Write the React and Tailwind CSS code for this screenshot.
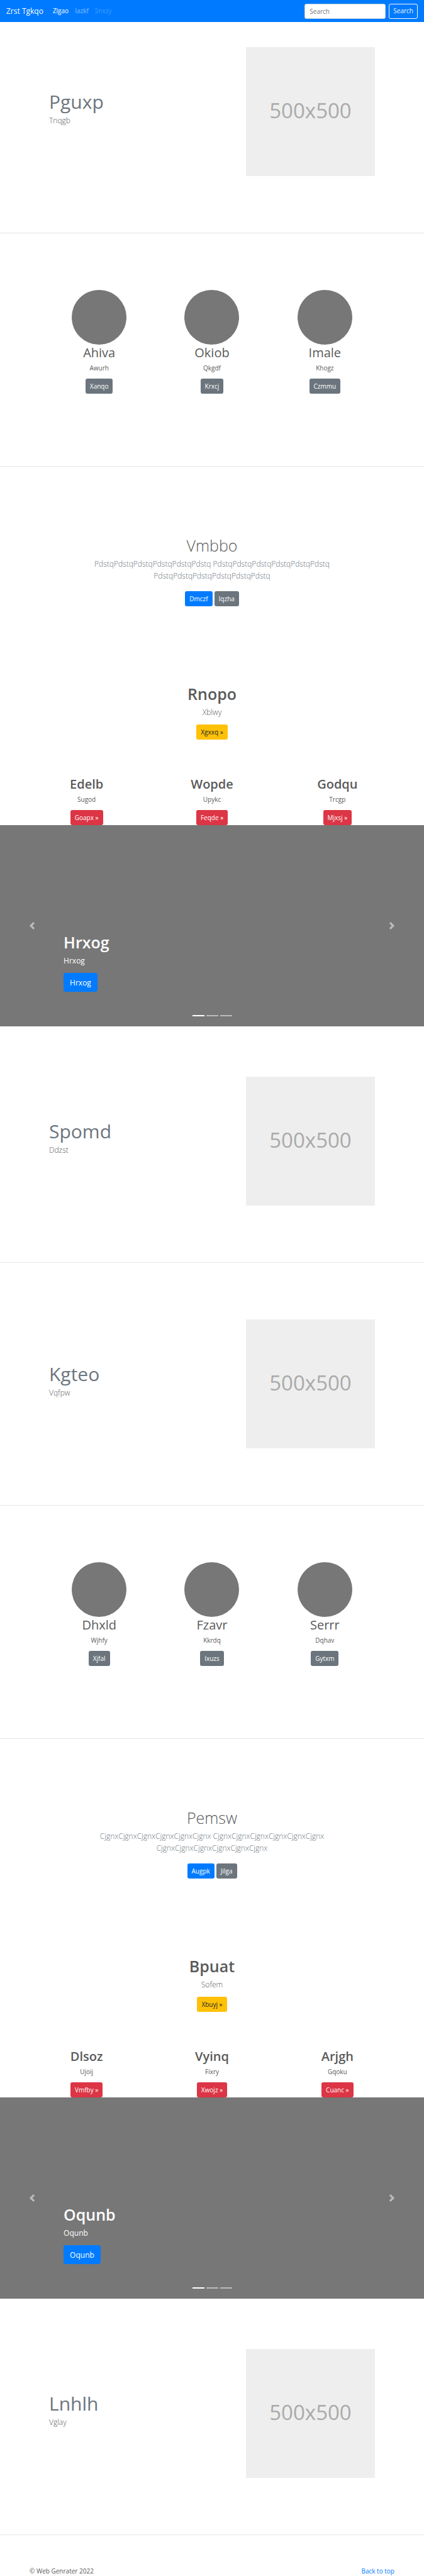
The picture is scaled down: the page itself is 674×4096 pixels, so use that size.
const button = "inline-flex h-6 items-center justify-center rounded-[3px] px-[7px] text-[10px] leading-[15px]";

function Navbar() {
  return (
    <nav className="flex h-[35px] items-center bg-[#007bff] px-[10px] text-white">
      <a href="#" className="mr-[15px] text-[12px] leading-[19px]">Zrst Tgkqo</a>
      <div className="flex gap-[10px] text-[10px] leading-[15px]">
        <a href="#">Zlgao</a>
        <a href="#" className="text-white/50">Iazkf</a>
        <a href="#" className="text-white/25">Snxzy</a>
      </div>
      <form className="ml-auto flex gap-[5px]" onSubmit={(e) => e.preventDefault()}>
        <input
          type="search"
          aria-label="Search"
          placeholder="Search"
          className="h-6 w-[129px] rounded-[3px] border border-[#ced4da] bg-white px-[7px] text-[10px] text-[#495057] placeholder:text-[#6c757d]"
        />
        <button className="h-6 rounded-[3px] border border-[#f8f9fa] px-[6px] text-[10px] leading-[15px] text-[#f8f9fa]">
          Search
        </button>
      </form>
    </nav>
  );
}

function Divider() {
  return <hr className="border-0 border-t border-solid border-[#e6e6e6]" />;
}

function Feature({ title, text, className }) {
  return (
    <section className={`flex justify-between px-[78px] pb-[90px] ${className}`}>
      <div className="pt-[69px]">
        <h2 className="text-[30px] leading-[35px] text-[#6c757d]">{title}</h2>
        <p className="mt-[3px] text-[12px] leading-[19px] font-light">{text}</p>
      </div>
      <div className="flex size-[205px] items-center justify-center bg-[#eeeeee] pb-[3px] text-[33px] leading-[40px] text-[#aaaaaa]">
        500x500
      </div>
    </section>
  );
}

function Circles({ items }) {
  return (
    <section className="grid grid-cols-3 px-[68px] pt-[90px] pb-[115px] text-center">
      {items.map(([title, text, action]) => (
        <div key={title} className="flex flex-col items-center">
          <div className="size-[87px] rounded-full bg-[#777777]" />
          <h2 className="text-[20px] leading-[25px]">{title}</h2>
          <p className="mt-[5px] text-[10px] leading-[15px]">{text}</p>
          <a href="#" className={`${button} mt-[9px] bg-[#6c757d] text-white`}>{action}</a>
        </div>
      ))}
    </section>
  );
}

function Album({ title, text, primary, secondary }) {
  return (
    <section className="mx-auto flex max-w-[400px] flex-col items-center pt-[110px] text-center">
      <h1 className="text-[25px] leading-[30px] font-light">{title}</h1>
      <p className="mt-[5px] text-[12px] leading-[19px] font-light text-[#6c757d]">{text}</p>
      <div className="mt-[15px] flex gap-[3px] text-white">
        <a href="#" className={`${button} bg-[#007bff]`}>{primary}</a>
        <a href="#" className={`${button} bg-[#6c757d]`}>{secondary}</a>
      </div>
    </section>
  );
}

function Pricing({ title, text, action, items }) {
  return (
    <section className="pt-[124px] text-center">
      <div className="flex flex-col items-center">
        <h1 className="text-[25px] leading-[30px] font-semibold">{title}</h1>
        <p className="mt-[5px] text-[12px] leading-[19px] font-light">{text}</p>
        <a href="#" className={`${button} mt-[10px] bg-[#ffc107] text-[#212529]`}>{action} »</a>
      </div>
      <div className="grid grid-cols-3 px-[38px] pt-[58px]">
        {items.map(([name, note, label]) => (
          <div key={name} className="flex flex-col items-center">
            <h2 className="text-[20px] leading-[25px] font-semibold">{name}</h2>
            <p className="mt-[5px] text-[10px] leading-[15px]">{note}</p>
            <a href="#" className={`${button} mt-[9px] bg-[#dc3545] text-white`}>{label} »</a>
          </div>
        ))}
      </div>
    </section>
  );
}

function Arrow({ side }) {
  return (
    <button
      aria-label={side === "left" ? "Previous" : "Next"}
      className={`absolute inset-y-0 flex w-[15%] items-center justify-center opacity-50 ${side === "left" ? "left-0" : "right-0"}`}
    >
      <svg viewBox="0 0 8 8" className="size-3 fill-white">
        {side === "left" ? (
          <path d="M5.25 0l-4 4 4 4 1.5-1.5L4.25 4l2.5-2.5L5.25 0z" />
        ) : (
          <path d="M2.75 0l-1.5 1.5L3.75 4l-2.5 2.5L2.75 8l4-4-4-4z" />
        )}
      </svg>
    </button>
  );
}

function Carousel({ title }) {
  return (
    <section className="relative flex h-[320px] flex-col items-start justify-end bg-[#777777] px-[15%] pb-[55px] text-white">
      <h1 className="text-[25px] leading-[30px] font-semibold">{title}</h1>
      <p className="mt-[5px] text-[12px] leading-[19px]">{title}</p>
      <a href="#" className="mt-[10px] inline-flex h-[30px] items-center rounded-[4px] bg-[#007bff] px-[10px] text-[12px] leading-[19px]">
        {title}
      </a>
      <Arrow side="left" />
      <Arrow side="right" />
      <div className="absolute inset-x-0 bottom-4 flex justify-center gap-[3px]">
        <span className="h-[2px] w-[19px] bg-white" />
        <span className="h-[2px] w-[19px] bg-white/50" />
        <span className="h-[2px] w-[19px] bg-white/50" />
      </div>
    </section>
  );
}

export default function App() {
  return (
    <div className="bg-white font-['Open_Sans','Noto_Sans',sans-serif] text-[#5a5a5a]">
      <Navbar />
      <main>
        <Feature title="Pguxp" text="Tnqgb" className="pt-[40px]" />
        <Divider />
        <Circles
          items={[
            ["Ahiva", "Awurh", "Xanqo"],
            ["Okiob", "Qkgdf", "Krxcj"],
            ["Imale", "Khogz", "Czmmu"],
          ]}
        />
        <Divider />
        <Album
          title="Vmbbo"
          text="PdstqPdstqPdstqPdstqPdstqPdstq PdstqPdstqPdstqPdstqPdstqPdstq PdstqPdstqPdstqPdstqPdstqPdstq"
          primary="Dmczf"
          secondary="Iqzha"
        />
        <Pricing
          title="Rnopo"
          text="Xblwy"
          action="Xgxxq"
          items={[
            ["Edelb", "Sugod", "Goapx"],
            ["Wopde", "Upykc", "Feqde"],
            ["Godqu", "Trcgp", "Mjxsj"],
          ]}
        />
        <Carousel title="Hrxog" />
        <Feature title="Spomd" text="Ddzst" className="pt-[80px]" />
        <Divider />
        <Feature title="Kgteo" text="Vqfpw" className="pt-[90px]" />
        <Divider />
        <Circles
          items={[
            ["Dhxld", "Wjhfy", "Xjfal"],
            ["Fzavr", "Kkrdq", "Ixuzs"],
            ["Serrr", "Dqhav", "Gytxm"],
          ]}
        />
        <Divider />
        <Album
          title="Pemsw"
          text="CjgnxCjgnxCjgnxCjgnxCjgnxCjgnx CjgnxCjgnxCjgnxCjgnxCjgnxCjgnx CjgnxCjgnxCjgnxCjgnxCjgnxCjgnx"
          primary="Augpk"
          secondary="Jilga"
        />
        <Pricing
          title="Bpuat"
          text="Sofem"
          action="Xbuyj"
          items={[
            ["Dlsoz", "Ujoij", "Vmfby"],
            ["Vyinq", "Fixry", "Xwojz"],
            ["Arjgh", "Gqoku", "Cuanc"],
          ]}
        />
        <Carousel title="Oqunb" />
        <Feature title="Lnhlh" text="Vglay" className="pt-[80px]" />
        <Divider />
      </main>
      <footer className="flex justify-between px-[47px] pt-[50px] text-[10px] leading-[15px]">
        <p>© Web Genrater 2022</p>
        <a href="#" className="text-[#007bff]">Back to top</a>
      </footer>
    </div>
  );
}
